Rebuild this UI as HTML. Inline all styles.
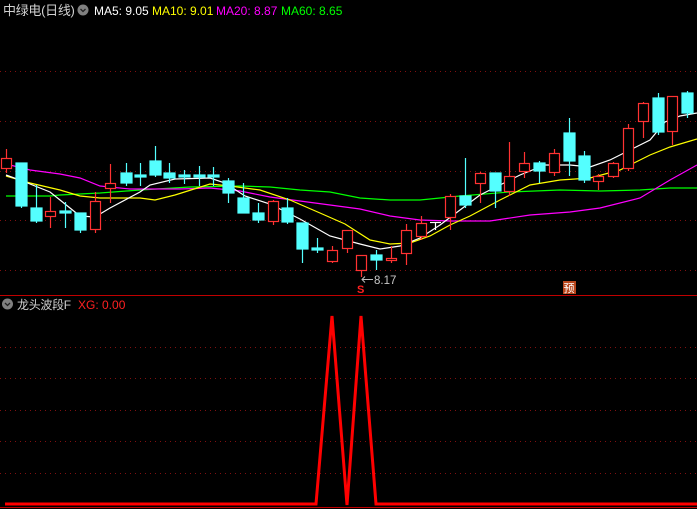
<!DOCTYPE html>
<html><head><meta charset="utf-8"><style>
html,body{margin:0;padding:0;background:#000;width:697px;height:509px;overflow:hidden}
svg{display:block}
text{font-family:"Liberation Sans","Noto Sans CJK SC",sans-serif}
</style></head><body>
<svg width="697" height="509" viewBox="0 0 697 509" xmlns="http://www.w3.org/2000/svg">
<g stroke="#801010" stroke-width="1" stroke-dasharray="1,4">
<line x1="0" y1="71.5" x2="697" y2="71.5"/><line x1="0" y1="121.5" x2="697" y2="121.5"/><line x1="0" y1="171.5" x2="697" y2="171.5"/><line x1="0" y1="220.5" x2="697" y2="220.5"/><line x1="0" y1="270.5" x2="697" y2="270.5"/>
<line x1="0" y1="347.5" x2="697" y2="347.5"/><line x1="0" y1="378.5" x2="697" y2="378.5"/><line x1="0" y1="410.5" x2="697" y2="410.5"/><line x1="0" y1="441.5" x2="697" y2="441.5"/><line x1="0" y1="473.5" x2="697" y2="473.5"/>
</g>
<line x1="0" y1="295.5" x2="697" y2="295.5" stroke="#c00000"/>
<line x1="0" y1="507.5" x2="697" y2="507.5" stroke="#c00000"/>
<g fill="none" stroke-width="1.2">
<polyline stroke="#00ff00" points="6,196 50,196 60,195 100,193 140,190 190,187 240,186 270,187 300,190 330,192 360,198 390,200 420,200 460,196 510,192 560,190 600,191 640,190 670,188 697,188"/>
<polyline stroke="#ff00ff" points="6,164 30,170 60,174 80,178 100,186 130,189 180,189 210,188 240,191 270,197 300,201 330,205 360,209 390,216 420,220 450,221 490,221 530,215 570,212 600,208 640,198 670,180 697,165"/>
<polyline stroke="#ffff00" points="6,176 30,183 60,190 80,196 100,198 140,198 155,200 175,195 210,184 230,186 260,190 290,200 320,213 345,224 370,240 390,244 410,243 430,236 450,225 470,216 500,200 530,185 560,180 590,178 620,170 650,155 670,147 697,139"/>
<polyline stroke="#ffffff" points="6,175 20,180 50,192 60,200 80,216 95,217 110,208 140,192 150,185 175,179 210,178 225,183 245,196 270,204 300,219 330,236 360,244 380,249 400,246 420,238 440,225 460,210 480,195 500,185 520,175 545,165 570,165 590,167 610,160 630,150 650,140 665,122 680,116 697,113"/>
</g>
<g stroke="#ff3232" fill="#000" stroke-width="1.2">
<line x1="6.5" y1="149" x2="6.5" y2="173"/><rect x="1.5" y="158.5" width="10" height="10"/>
<line x1="50.5" y1="197" x2="50.5" y2="228"/><rect x="45.5" y="211.5" width="10" height="5"/>
<line x1="95.5" y1="192" x2="95.5" y2="233"/><rect x="90.5" y="201.5" width="10" height="28"/>
<line x1="110.5" y1="164" x2="110.5" y2="203"/><rect x="105.5" y="183.5" width="10" height="5"/>
<line x1="273.5" y1="200" x2="273.5" y2="225"/><rect x="268.5" y="201.5" width="10" height="20"/>
<line x1="332.5" y1="246" x2="332.5" y2="263"/><rect x="327.5" y="250.5" width="10" height="11"/>
<line x1="347.5" y1="230" x2="347.5" y2="253"/><rect x="342.5" y="230.5" width="10" height="18"/>
<line x1="361.5" y1="255" x2="361.5" y2="277"/><rect x="356.5" y="255.5" width="10" height="15"/>
<line x1="391.5" y1="246" x2="391.5" y2="263"/><rect x="386.5" y="258.5" width="10" height="2"/>
<line x1="406.5" y1="224" x2="406.5" y2="265"/><rect x="401.5" y="230.5" width="10" height="23"/>
<line x1="421.5" y1="216" x2="421.5" y2="240"/><rect x="416.5" y="223.5" width="10" height="13"/>
<line x1="450.5" y1="194" x2="450.5" y2="230"/><rect x="445.5" y="196.5" width="10" height="21"/>
<line x1="480.5" y1="172" x2="480.5" y2="203"/><rect x="475.5" y="173.5" width="10" height="10"/>
<line x1="509.5" y1="142" x2="509.5" y2="196"/><rect x="504.5" y="176.5" width="10" height="15"/>
<line x1="524.5" y1="152" x2="524.5" y2="178"/><rect x="519.5" y="163.5" width="10" height="8"/>
<line x1="554.5" y1="149" x2="554.5" y2="176"/><rect x="549.5" y="153.5" width="10" height="19"/>
<line x1="598.5" y1="174" x2="598.5" y2="190"/><rect x="593.5" y="176.5" width="10" height="5"/>
<line x1="613.5" y1="162" x2="613.5" y2="178"/><rect x="608.5" y="163.5" width="10" height="13"/>
<line x1="628.5" y1="124" x2="628.5" y2="171"/><rect x="623.5" y="128.5" width="10" height="40"/>
<line x1="643.5" y1="102" x2="643.5" y2="138"/><rect x="638.5" y="103.5" width="10" height="18"/>
<line x1="672.5" y1="96" x2="672.5" y2="145"/><rect x="667.5" y="96.5" width="10" height="35"/>
</g>
<g stroke="#54ffff" fill="#54ffff" stroke-width="1.2">
<line x1="21.5" y1="163" x2="21.5" y2="208"/><rect x="16" y="163" width="11" height="43"/>
<line x1="36.5" y1="185" x2="36.5" y2="223"/><rect x="31" y="208" width="11" height="13"/>
<line x1="65.5" y1="202" x2="65.5" y2="228"/><rect x="60" y="211" width="11" height="2"/>
<line x1="80.5" y1="213" x2="80.5" y2="233"/><rect x="75" y="213" width="11" height="17"/>
<line x1="126.5" y1="163" x2="126.5" y2="186"/><rect x="121" y="173" width="11" height="10"/>
<line x1="140.5" y1="163" x2="140.5" y2="186"/><rect x="135" y="175" width="11" height="2"/>
<line x1="155.5" y1="146" x2="155.5" y2="177"/><rect x="150" y="161" width="11" height="14"/>
<line x1="169.5" y1="163" x2="169.5" y2="183"/><rect x="164" y="173" width="11" height="5"/>
<line x1="184.5" y1="170" x2="184.5" y2="184"/><rect x="179" y="175" width="11" height="2"/>
<line x1="199.5" y1="166" x2="199.5" y2="186"/><rect x="194" y="175" width="11" height="2"/>
<line x1="213.5" y1="167" x2="213.5" y2="186"/><rect x="208" y="175" width="11" height="2"/>
<line x1="228.5" y1="178" x2="228.5" y2="203"/><rect x="223" y="181" width="11" height="12"/>
<line x1="243.5" y1="183" x2="243.5" y2="213"/><rect x="238" y="198" width="11" height="15"/>
<line x1="258.5" y1="203" x2="258.5" y2="223"/><rect x="253" y="213" width="11" height="7"/>
<line x1="287.5" y1="198" x2="287.5" y2="224"/><rect x="282" y="208" width="11" height="14"/>
<line x1="302.5" y1="223" x2="302.5" y2="263"/><rect x="297" y="223" width="11" height="26"/>
<line x1="317.5" y1="238" x2="317.5" y2="253"/><rect x="312" y="248" width="11" height="2"/>
<line x1="376.5" y1="250" x2="376.5" y2="270"/><rect x="371" y="255" width="11" height="5"/>
<line x1="465.5" y1="158" x2="465.5" y2="208"/><rect x="460" y="196" width="11" height="9"/>
<line x1="495.5" y1="173" x2="495.5" y2="208"/><rect x="490" y="173" width="11" height="18"/>
<line x1="539.5" y1="161" x2="539.5" y2="183"/><rect x="534" y="163" width="11" height="8"/>
<line x1="569.5" y1="118" x2="569.5" y2="176"/><rect x="564" y="133" width="11" height="28"/>
<line x1="584.5" y1="151" x2="584.5" y2="183"/><rect x="579" y="156" width="11" height="24"/>
<line x1="658.5" y1="93" x2="658.5" y2="135"/><rect x="653" y="98" width="11" height="34"/>
<line x1="687.5" y1="91" x2="687.5" y2="118"/><rect x="682" y="93" width="11" height="20"/>
</g>
<g stroke="#fff" stroke-width="1.2"><line x1="430" y1="222.5" x2="441" y2="222.5"/><line x1="435.5" y1="222" x2="435.5" y2="230"/></g>
<g stroke="#bbb" stroke-width="1"><line x1="362" y1="279.5" x2="373" y2="279.5"/><polyline fill="none" points="365,276.5 362,279.5 365,282.5"/></g>
<text x="374" y="284" font-size="11.5" fill="#c8c8c8">8.17</text>
<text x="357" y="293" font-size="11" font-weight="bold" fill="#ff2020">S</text>
<rect x="563" y="281" width="13" height="13" fill="#b8461c"/>
<text x="563.5" y="292" font-size="11" fill="#fff">预</text>
<text x="3" y="15" font-size="13" fill="#d0d0d0" letter-spacing="-0.3">中绿电(日线)</text>
<circle cx="83" cy="10" r="5.5" fill="#808080"/><polyline points="80.5,9 83,11.5 85.5,9" fill="none" stroke="#222" stroke-width="1.3"/>
<text x="94" y="15" font-size="12" fill="#fff">MA5: 9.05</text>
<text x="152" y="15" font-size="12" fill="#ffff00">MA10: 9.01</text>
<text x="216" y="15" font-size="12" fill="#ff00ff">MA20: 8.87</text>
<text x="281" y="15" font-size="12" fill="#00ff00">MA60: 8.65</text>
<circle cx="7.5" cy="304" r="5.5" fill="#808080"/><polyline points="5,303 7.5,305.5 10,303" fill="none" stroke="#222" stroke-width="1.3"/>
<text x="17" y="309" font-size="12" fill="#d0d0d0" letter-spacing="-0.3">龙头波段F</text>
<text x="78" y="309" font-size="12" fill="#ff2020">XG: 0.00</text>
<polyline fill="none" stroke="#ff0000" stroke-width="3" points="5,504 316,504 332,316 347,505 361,316 376,504 697,504"/>
</svg>
</body></html>
